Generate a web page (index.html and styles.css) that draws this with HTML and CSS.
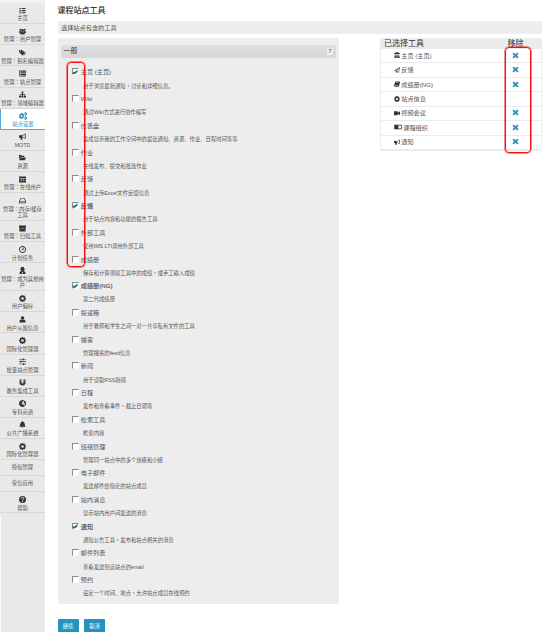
FILE: index.html
```html
<!DOCTYPE html>
<html lang="zh-CN">
<head>
<meta charset="utf-8">
<title>课程站点工具</title>
<link rel="stylesheet" href="styles.css">
</head>
<body>
<svg class="defs" viewBox="0 0 16 16">
<symbol id="list" viewBox="0 0 16 16"><path d="M1 2h3v3H1zM6 2h9v2.500H6zM1 7h3v3H1zM6 7h9v2.500H6zM1 12h3v3H1zM6 12h9v2.500H6z"/></symbol>
<symbol id="rows" viewBox="0 0 16 16"><path d="M0 1h3v3H0zM4 1h12v3H4zM0 5h3v3H0zM4 5h12v3H4zM0 9h3v3H0zM4 9h12v3H4zM0 13h3v2H0zM4 13h12v2H4z"/></symbol>
<symbol id="users" viewBox="0 0 16 16"><circle cx="3.500" cy="4" r="2.500"/><circle cx="12.500" cy="4" r="2.500"/><circle cx="8" cy="6" r="3.300"/><path d="M0 11V8q1-2 4-1l1 3-2 2zM16 11V8q-1-2-4-1l-1 3 2 2zM3 15v-3q1-3 5-3t5 3v3z"/></symbol>
<symbol id="tags" viewBox="0 0 16 16"><path fill-rule="evenodd" d="M0 2h6l7 7-5 6-8-8zM3 3.500a1.200 1.200 0 1 0 .1 0zM8 2l8 7-5 6-1-1 4-5-7-7z"/></symbol>
<symbol id="sitemap" viewBox="0 0 16 16"><path d="M6 1h4v4H9v2h5v4h2v4h-5v-4h2V8.500H9V11h1v4H6v-4h1V8.500H3V11h2v4H0v-4h2V7h5V5H6z"/></symbol>
<symbol id="gear" viewBox="0 0 16 16"><path fill-rule="evenodd" d="M6.500 0h3l.5 2.300 2-1.300 2.500 2.500L13 6l3 .5v3l-3 .5 1.500 2.500L12 15l-2-1.500-.5 2.500h-3L6 13.500 4 15l-2.500-2.500L3 10 0 9.500v-3L3 6 1.500 3.500 4 1l2 1.300zM8 5a3 3 0 1 0 .1 0z"/></symbol>
<symbol id="gears" viewBox="0 0 16 16"><path fill-rule="evenodd" d="M4 2h3l.5 2 2-.5 1 2L9 7.500l1.500 2-1.500 2.500-2-.5L6.500 14h-3L3 12l-2 .5L0 10l1.500-2L0 6l1.500-2L3 4.500zM5.200 6.300a1.800 1.800 0 1 0 .1 0zM12 0h2l.5 1.500L16 2v3l-1.500 1-.5 1.500h-2L11 5V2zM13 2.700a1 1 0 1 0 .1 0zM12 8.500h2l.5 1.500 1.500.5v3l-1.500 1-.5 1.500h-2L11 13.500v-3zM13 11.200a1 1 0 1 0 .1 0z"/></symbol>
<symbol id="horn" viewBox="0 0 16 16"><path fill-rule="evenodd" d="M0 5h6q4 0 8-4h1v5q2 1 0 2.500V13h-1q-4-3-7-3-.5 2 1.500 4L7 15.500H4L2.500 10H0zM8 6v2.500q3 .5 5.500 2.500V3.500Q11 5.500 8 6z"/></symbol>
<symbol id="folder" viewBox="0 0 16 16"><path d="M0 2h5l1 2h6v3H4l-4 5zM4 8h12l-3 6H0z"/></symbol>
<symbol id="grid" viewBox="0 0 16 16"><path d="M0 1h16v4H0zM0 6h5v4H0zM6 6h4v4H6zM11 6h5v4h-5zM0 11h16v4H0z"/></symbol>
<symbol id="disk" viewBox="0 0 16 16"><path fill-rule="evenodd" d="M4 2h8l4 7v5H0V9zM5 3.500L2 9h12l-3-5.500zM1.500 10v2.500h13V10z"/></symbol>
<symbol id="archive" viewBox="0 0 16 16"><path fill-rule="evenodd" d="M0 1h16v4H0zM1 5h14v10H1zM6 7v1.500h4V7z"/></symbol>
<symbol id="clock" viewBox="0 0 16 16"><path fill-rule="evenodd" d="M8 0a8 8 0 1 0 .1 0zM8 2a6 6 0 1 1-.1 0zM7.200 8.500L10 3.500l1.500 1L9 9.500H5V8z"/></symbol>
<symbol id="secret" viewBox="0 0 16 16"><path fill-rule="evenodd" d="M5 0h6l1 4h2v1.500h-2Q12 9 10 9q5 0 5 7H1q0-7 5-7-2 0-2-3.500H2V4h2zM7.300 11L6.500 15h3L8.700 11z"/></symbol>
<symbol id="user" viewBox="0 0 16 16"><circle cx="8" cy="4.500" r="4"/><path d="M1 15v-2q0-5 4-5 3 2 6 0 4 0 4 5v2z"/></symbol>
<symbol id="sliders" viewBox="0 0 16 16"><path d="M0 2h8V1h3v1h5v1.500h-5V5H8V3.500H0zM0 7.500h3v-1h3v1h10V9H6v1.500H3V9H0zM0 13h9v-1h3v1h4v1.500h-4V16H9v-1.500H0z"/></symbol>
<symbol id="magnet" viewBox="0 0 16 16"><path d="M1 1h5v3H1zM10 1h5v3h-5zM1 5h5v4q2 3 4 0V5h5v4q-1 6-7 6T1 9z"/></symbol>
<symbol id="globe" viewBox="0 0 16 16"><path fill-rule="evenodd" d="M8 0a8 8 0 1 0 .1 0zM8 2l4 1-2 3 4 2-2 5-3-4-2 1-1-3 2-2z"/></symbol>
<symbol id="bell" viewBox="0 0 16 16"><path d="M7 0h2v1.500q4 1 4 5 0 4 2.500 6.500H.5Q3 10.500 3 6.500q0-4 4-5zM6 14h4q-2 3-4 0z"/></symbol>
<symbol id="help" viewBox="0 0 16 16"><circle cx="8" cy="8" r="8"/><path d="M5 6q0-3 3-3t3 3q0 1.500-3 3v1" fill="none" stroke="#eee" stroke-width="2"/><path fill="#eee" d="M7 11.500h2v2H7z"/></symbol>
<symbol id="bank" viewBox="0 0 16 16"><path d="M8 0l8 4v1.500H0V4zM2 6.500h2.500V12H6V6.500h1.500V12H9V6.500h1.500V12H12V6.500h2V12h1v1.500H1V12h1zM0 14h16v2H0z"/></symbol>
<symbol id="plane" viewBox="0 0 16 16"><path fill-rule="evenodd" d="M16 0l-3 15-5-2-3 3v-5L0 9zM13 3L3 9l2.500 1zM14 3.500L7 11l5 2z"/></symbol>
<symbol id="book" viewBox="0 0 16 16"><path fill-rule="evenodd" d="M5 1h10l1 2-3 11q0 1-2 1H2q-3-1-1.500-4L3 3q0-2 2-2zM6 4l-.4 1.200h6L12 4zM2.500 12q-1 1.500.5 1.500h8l.5-1.500z"/></symbol>
<symbol id="video" viewBox="0 0 16 16"><path d="M0 3h10v4l6-4v11l-6-4v4H0z"/></symbol>
<symbol id="reader" viewBox="0 0 20 16"><path fill-rule="evenodd" d="M0 2h9l1 1 1-1h9v12h-9l-1 1-1-1H0zM11 4v8h7V4z"/></symbol>
<symbol id="cross" viewBox="0 0 16 16"><path d="M4 1l4 4 4-4 3 3-4 4 4 4-3 3-4-4-4 4-3-3 4-4-4-4z"/></symbol>
</svg>
<div class="page">
<nav class="side">
<a class="item"><svg><use href="#list"/></svg><span>主页</span></a>
<a class="item"><svg><use href="#users"/></svg><span>管理<i class="mid" lang="zh-TW">：</i>用户管理</span></a>
<a class="item"><svg><use href="#tags"/></svg><span>管理<i class="mid" lang="zh-TW">：</i>别名编辑器</span></a>
<a class="item"><svg><use href="#rows"/></svg><span>管理<i class="mid" lang="zh-TW">：</i>站点管理</span></a>
<a class="item"><svg><use href="#sitemap"/></svg><span>管理<i class="mid" lang="zh-TW">：</i>领域编辑器</span></a>
<a class="item active"><svg><use href="#gears"/></svg><span>站点设置</span></a>
<a class="item"><svg><use href="#horn"/></svg><span>MOTD</span></a>
<a class="item"><svg><use href="#folder"/></svg><span>资源</span></a>
<a class="item"><svg><use href="#grid"/></svg><span>管理<i class="mid" lang="zh-TW">：</i>在线用户</span></a>
<a class="item tall"><svg><use href="#disk"/></svg><span>管理<i class="mid" lang="zh-TW">：</i>内存/缓存<br>工具</span></a>
<a class="item"><svg><use href="#archive"/></svg><span>管理<i class="mid" lang="zh-TW">：</i>归档工具</span></a>
<a class="item"><svg><use href="#clock"/></svg><span>计划任务</span></a>
<a class="item tall"><svg><use href="#secret"/></svg><span>管理<i class="mid" lang="zh-TW">：</i>成为其他用<br>户</span></a>
<a class="item"><svg><use href="#gear"/></svg><span>用户偏好</span></a>
<a class="item"><svg><use href="#user"/></svg><span>用户从属信息</span></a>
<a class="item"><svg><use href="#gear"/></svg><span>国际化管理器</span></a>
<a class="item"><svg><use href="#sliders"/></svg><span>批量站点管理</span></a>
<a class="item"><svg><use href="#magnet"/></svg><span>教务集成工具</span></a>
<a class="item"><svg><use href="#globe"/></svg><span>专科英语</span></a>
<a class="item"><svg><use href="#bell"/></svg><span>公共广播系统</span></a>
<a class="item"><svg><use href="#gear"/></svg><span>国际化管理器</span></a>
<a class="item plain"><span>授权管理</span></a>
<a class="item plain"><span>受信应用</span></a>
<a class="item"><svg><use href="#help"/></svg><span>帮助</span></a>
<div class="side-rest"></div>
</nav>
<main class="main">
<h1>课程站点工具</h1>
<p class="intro">选择站点包含的工具</p>
<div class="columns">
<section class="panel">
<h2 class="panel-head"><span>一般</span><b class="count">7</b></h2>
<ul class="tools">
<li><label class="on"><i class="box"></i>主页 (主页)</label><p>用于浏览最新通知<i class="mid" lang="zh-TW">，</i>讨论和详细信息。</p></li>
<li><label><i class="box"></i>Wiki</label><p>通过Wiki方式进行协作编写</p></li>
<li><label><i class="box"></i>仪表盘</label><p>集成显示我的工作空间中的最近通知、资源、作业、日程时间等等</p></li>
<li><label><i class="box"></i>作业</label><p>在线发布、提交和批改作业</p></li>
<li><label><i class="box"></i>反馈</label><p>通过上传Excel文件反馈信息</p></li>
<li><label class="on strong"><i class="box"></i>反馈</label><p>用于站点内容和功能的报告工具</p></li>
<li><label><i class="box"></i>外部工具</label><p>使用IMS LTI调用外部工具</p></li>
<li><label><i class="box"></i>成绩册</label><p>保存和计算测验工具中的成绩<i class="mid" lang="zh-TW">，</i>或手工输入成绩</p></li>
<li><label class="on strong"><i class="box"></i>成绩册(NG)</label><p>第二代成绩册</p></li>
<li><label><i class="box"></i>投递箱</label><p>用于教师和学生之间一对一共享私有文件的工具</p></li>
<li><label><i class="box"></i>播客</label><p>管理播客的feed信息</p></li>
<li><label><i class="box"></i>新闻</label><p>用于读取RSS新闻</p></li>
<li><label><i class="box"></i>日程</label><p>发布和查看事件<i class="mid" lang="zh-TW">，</i>截止日期等</p></li>
<li><label><i class="box"></i>检索工具</label><p>检索内容</p></li>
<li><label><i class="box"></i>班组管理</label><p>管理同一站点中的多个班级和小组</p></li>
<li><label><i class="box"></i>电子邮件</label><p>发送邮件给指定的站点成员</p></li>
<li><label><i class="box"></i>站内消息</label><p>显示站内用户间发送的消息</p></li>
<li><label class="on strong"><i class="box"></i>通知</label><p>通知公告工具<i class="mid" lang="zh-TW">，</i>发布和站点相关的消息</p></li>
<li><label><i class="box"></i>邮件列表</label><p>查看发送到该站点的email</p></li>
<li><label><i class="box"></i>预约</label><p>设定一个时间、地点<i class="mid" lang="zh-TW">，</i>允许站点成员在线预约</p></li>
</ul>
<div class="mark mark-checks"></div>
</section>
<section class="chosen">
<div class="chosen-head"><span>已选择工具</span><span class="rm">移除</span></div>
<div class="row"><svg><use href="#bank"/></svg><span>主页 (主页)</span><svg class="x"><use href="#cross"/></svg></div>
<div class="row"><svg><use href="#plane"/></svg><span>反馈</span><svg class="x"><use href="#cross"/></svg></div>
<div class="row"><svg><use href="#book"/></svg><span>成绩册(NG)</span><svg class="x"><use href="#cross"/></svg></div>
<div class="row"><svg><use href="#gear"/></svg><span>站点信息</span></div>
<div class="row"><svg><use href="#video"/></svg><span>视频会议</span><svg class="x"><use href="#cross"/></svg></div>
<div class="row"><svg class="wide"><use href="#reader"/></svg><span>课程组织</span><svg class="x"><use href="#cross"/></svg></div>
<div class="row"><svg><use href="#horn"/></svg><span>通知</span><svg class="x"><use href="#cross"/></svg></div>
<div class="mark mark-remove"></div>
</section>
</div>
<div class="actions"><button>继续</button><button>取消</button></div>
</main>
</div>
</body>
</html>
```
FILE: styles.css
```css
* { box-sizing: border-box; }
html, body { margin: 0; height: 632px; overflow: hidden; background: #fff; }
body { font-family: "Liberation Sans", "Noto Sans CJK SC", sans-serif; color: #555; }
h1, h2, p, ul { margin: 0; padding: 0; font-weight: 400; }
ul { list-style: none; }
svg { display: block; fill: #333; flex: none; }
.defs { display: none; }
.page { display: flex; height: 632px; }
/* full-width punctuation centred in its cell */
.mid { font-family: "Noto Sans CJK TC", sans-serif; font-style: normal; line-height: 1; }

.side { width: 45px; flex: none; display: flex; flex-direction: column; background: #e9e9e9; border-top: 3px solid #f1f1f1; }
.item { height: 21.150px; flex: none; display: flex; flex-direction: column; align-items: center; padding-top: 3.500px; border-bottom: 1px solid #d8d8d8; font-size: 5.330px; line-height: 6.700px; color: #555; text-align: center; white-space: nowrap; }
.item svg { width: 7px; height: 7px; margin-bottom: 1.800px; }
.item.tall { height: 27.800px; }
.item.plain { height: 16px; padding-top: 3.500px; }
.item.active { background: #fff; color: #2693bd; border-left: 1px solid #58acd0; border-bottom-color: #58acd0; }
.item.active svg { fill: #2693bd; width: 8px; height: 8px; margin-bottom: .8px; }
.side-rest { flex: 1; margin-top: 4px; border-left: 1px solid #fff; }

.main { width: 484px; margin-left: 12.500px; flex: none; }
h1 { height: 20.500px; padding-top: 5px; font-size: 8px; line-height: 12px; color: #222; -webkit-text-stroke: .15px #222; }
.intro { height: 13px; padding-left: 3.500px; background: #eee; font-size: 6.200px; line-height: 13px; }
.columns { display: flex; align-items: flex-start; justify-content: space-between; margin-top: 4.500px; }

.panel { position: relative; width: 281.500px; height: 565.500px; padding: 7px 3px 0; background: #ededed; border-radius: 2px; }
.panel-head { display: flex; align-items: center; justify-content: space-between; height: 13px; padding: 0 3px 1px; border-radius: 2px; background: linear-gradient(#dfdfdf, #d6d6d6); font-size: 7px; line-height: 12px; color: #333; }
.count { width: 6px; height: 7px; border-radius: 1px; background: #eee; font-size: 5.300px; line-height: 7px; text-align: center; font-weight: 400; }
.tools { padding: 7.300px 0 0 11px; }
.tools li { height: 26.720px; }
.tools label { display: flex; align-items: center; height: 13.400px; gap: 2.300px; font-size: 6.150px; white-space: nowrap; }
.tools .strong { color: #444; -webkit-text-stroke: .1px #444; }
.tools p { height: 13.300px; padding-left: 11.500px; font-size: 5.330px; line-height: 14.500px; white-space: nowrap; }
.box { width: 7px; height: 7px; flex: none; overflow: hidden; background: #fff; border-top: 1px solid #8b8b85; border-left: 1px solid #8b8b85; border-right: 1px solid #f8f8f5; border-bottom: 1px solid #f8f8f5; }
.on .box::after { content: ""; display: block; width: 5px; height: 5px; background: #155f91; clip-path: polygon(0 35%, 35% 60%, 100% 5%, 100% 50%, 38% 100%, 0 75%); }

.chosen { position: relative; width: 161.500px; border: 1px solid #ececec; border-radius: 2px; }
.chosen-head { display: flex; height: 10px; padding-left: 3px; background: #ebebeb; font-size: 8px; line-height: 10px; color: #333; }
.chosen-head .rm { margin-left: auto; margin-right: 17px; }
.row { display: flex; align-items: center; height: 14.450px; padding: 0 21.500px 1px 13px; border-bottom: 1px solid #ececec; font-size: 6.150px; white-space: nowrap; }
.row svg { width: 6px; height: 6px; margin-right: 1.300px; }
.row .wide { width: 8px; }
.row .x { width: 7px; height: 7px; margin: 0 0 0 auto; fill: #2a8fbd; }

.mark { position: absolute; border: 1px solid #fa1212; border-radius: 4px; box-shadow: 0 0 0 .5px #fa1212; }
.mark-checks { left: 9px; top: 24px; width: 18.500px; height: 204.500px; }
.mark-remove { left: 123.500px; top: 7.500px; width: 26px; height: 106.500px; }

.actions { display: flex; gap: 5.500px; margin-top: 15px; }
button { width: 21px; height: 14px; padding: 0; border: 0; border-radius: 1px; background: #2693bd; color: #fff; font: 5.330px/14px "Liberation Sans", "Noto Sans CJK SC", sans-serif; }
```
